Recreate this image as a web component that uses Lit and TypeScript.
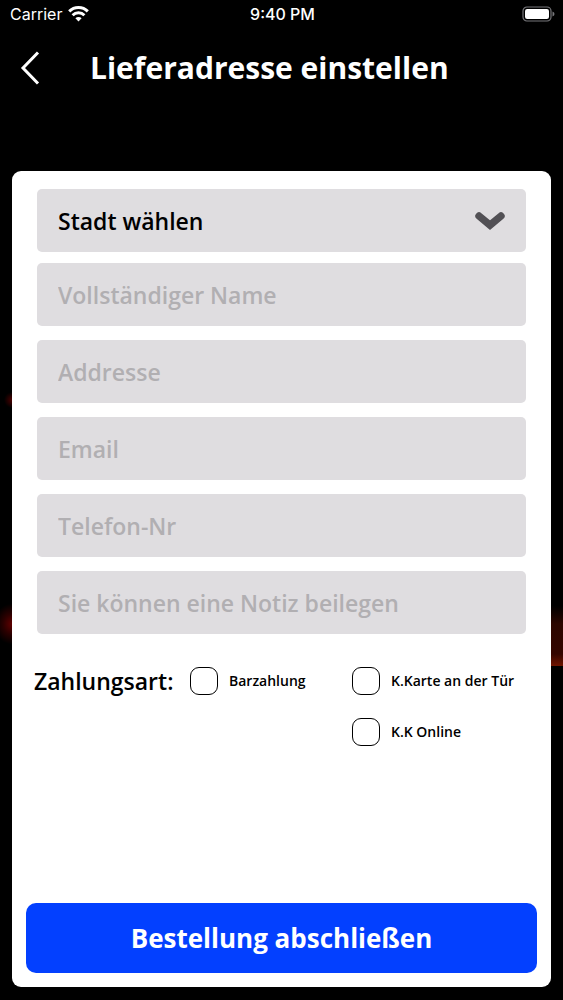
import { LitElement, html, css } from "lit";
import { customElement } from "lit/decorators.js";

interface Field {
  name: string;
  type: string;
  label: string;
}

const FIELDS: Field[] = [
  { name: "fullname", type: "text", label: "Vollständiger Name" },
  { name: "address", type: "text", label: "Addresse" },
  { name: "email", type: "email", label: "Email" },
  { name: "phone", type: "tel", label: "Telefon-Nr" },
  { name: "note", type: "text", label: "Sie können eine Notiz beilegen" },
];

@customElement("status-bar")
export class StatusBar extends LitElement {
  static styles = css`
    :host {
      display: grid;
      grid-template-columns: 1fr auto 1fr;
      align-items: center;
      height: 28px;
      padding: 0 8px 0 10px;
      color: #fff;
      font: 400 16px/20px Inter, "Liberation Sans", sans-serif;
    }
    .carrier {
      display: flex;
      align-items: center;
      gap: 6px;
    }
    .time {
      font-weight: 500;
    }
    .battery {
      justify-self: end;
    }
    svg {
      display: block;
    }
  `;

  render() {
    return html`
      <span class="carrier">
        Carrier
        <svg width="21" height="16" viewBox="0 0 21 16" fill="none" stroke="#fff" stroke-width="3" aria-hidden="true">
          <path d="M1.2 5.4a13.2 13.2 0 0 1 18.6 0" />
          <path d="M4.6 9.2a8.4 8.4 0 0 1 11.8 0" />
          <path d="M10.5 15.4l-3.1-3.1a4.4 4.4 0 0 1 6.2 0z" fill="#fff" stroke="none" />
        </svg>
      </span>
      <span class="time">9:40 PM</span>
      <svg class="battery" width="33" height="16" viewBox="0 0 33 16" aria-hidden="true">
        <rect x="1" y="1" width="28" height="14" rx="4" fill="none" stroke="#77777b" stroke-width="1.2" />
        <rect x="3" y="3" width="24" height="10" rx="2.2" fill="#fff" />
        <path d="M30.5 5.6q2 .8 2 2.4t-2 2.4z" fill="#77777b" />
      </svg>
    `;
  }
}

@customElement("payment-options")
export class PaymentOptions extends LitElement {
  static styles = css`
    :host {
      display: block;
    }
    .group {
      display: grid;
      grid-template-columns: 156fr 162fr 185fr;
      row-gap: 23px;
      align-items: center;
    }
    .title {
      font-size: 23px;
      line-height: 28px;
      font-weight: 600;
    }
    .option {
      display: flex;
      align-items: center;
      gap: 11px;
      font-size: 14px;
      line-height: 28px;
      font-weight: 600;
      white-space: nowrap;
    }
    .last {
      grid-column: 3;
    }
    .box {
      appearance: none;
      box-sizing: border-box;
      flex: none;
      width: 28px;
      height: 28px;
      margin: 0;
      border: 1px solid #000;
      border-radius: 9px;
      background: #fff;
    }
    .box:checked {
      background: #0340ff;
    }
  `;

  render() {
    return html`
      <div class="group" role="group" aria-labelledby="title">
        <span class="title" id="title">Zahlungsart:</span>
        <label class="option"><input class="box" type="checkbox" name="cash" />Barzahlung</label>
        <label class="option"><input class="box" type="checkbox" name="card" />K.Karte an der Tür</label>
        <label class="option last"><input class="box" type="checkbox" name="online" />K.K Online</label>
      </div>
    `;
  }
}

@customElement("app-root")
export class AppRoot extends LitElement {
  static styles = css`
    :host {
      display: flex;
      flex-direction: column;
      box-sizing: border-box;
      min-height: 100vh;
      font-family: "Open Sans", "Noto Sans", sans-serif;
      color: #000;
      background:
        radial-gradient(circle at 12px 400px, #4a0000 0, transparent 8px),
        radial-gradient(ellipse at 12px 624px, #600000 0, #2a0000 9px, transparent 18px),
        linear-gradient(transparent, #2c0600 30%, #340500 80%, #701400) right 0 top 606px / 14px 60px no-repeat,
        #000;
    }
    .header {
      display: grid;
      grid-template-columns: 60px 1fr;
      align-items: center;
      gap: 30px;
      height: 80px;
      margin-bottom: 63px;
    }
    .back {
      display: flex;
      justify-content: center;
      height: 60px;
      align-items: center;
      padding: 0;
      border: 0;
      background: none;
    }
    .heading {
      margin: 0;
      color: #fff;
      font-size: 30px;
      line-height: 40px;
      font-weight: 700;
    }
    .card {
      flex: 1;
      display: flex;
      flex-direction: column;
      margin: 0 12px 13px;
      padding: 18px 14px 14px;
      border-radius: 9px;
      background: #fff;
    }
    .fields {
      display: flex;
      flex-direction: column;
      gap: 14px;
      margin: 0 11px;
    }
    .city {
      display: grid;
      align-items: center;
      margin-bottom: -3px;
    }
    .city > * {
      grid-area: 1 / 1;
    }
    .chevron {
      justify-self: end;
      margin-right: 20px;
      pointer-events: none;
    }
    .control {
      appearance: none;
      box-sizing: border-box;
      width: 100%;
      height: 63px;
      margin: 0;
      padding: 0 21px;
      border: 0;
      border-radius: 5px;
      background: #dfdde0;
      color: #000;
      font: 600 23px/30px "Open Sans", "Noto Sans", sans-serif;
    }
    .control::placeholder {
      color: #b1afb2;
      opacity: 1;
    }
    .payment {
      margin: 33px 0 24px 8px;
    }
    .submit {
      height: 70px;
      margin-top: auto;
      border: 0;
      border-radius: 10px;
      background: #0340ff;
      color: #fff;
      font: 700 26px/36px "Open Sans", "Noto Sans", sans-serif;
    }
  `;

  render() {
    return html`
      <status-bar></status-bar>
      <header class="header">
        <button class="back" type="button" aria-label="Zurück">
          <svg width="20" height="34" viewBox="0 0 20 34" fill="none" stroke="#fff" stroke-width="3" aria-hidden="true">
            <path d="M18 1.5L3 17l15 15.5" />
          </svg>
        </button>
        <h1 class="heading">Lieferadresse einstellen</h1>
      </header>
      <form class="card">
        <div class="fields">
          <div class="city">
            <select class="control" name="city" aria-label="Stadt wählen">
              <option>Stadt wählen</option>
            </select>
            <svg class="chevron" width="32" height="20" viewBox="0 0 32 20" fill="none" stroke="#525055" stroke-width="7.4" stroke-linecap="round" aria-hidden="true">
              <path d="M5 5l11 9.2L27 5" />
            </svg>
          </div>
          ${FIELDS.map(
            (f) => html`<input class="control" type=${f.type} name=${f.name} placeholder=${f.label} aria-label=${f.label} />`
          )}
        </div>
        <payment-options class="payment"></payment-options>
        <button class="submit" type="button">Bestellung abschließen</button>
      </form>
    `;
  }
}
